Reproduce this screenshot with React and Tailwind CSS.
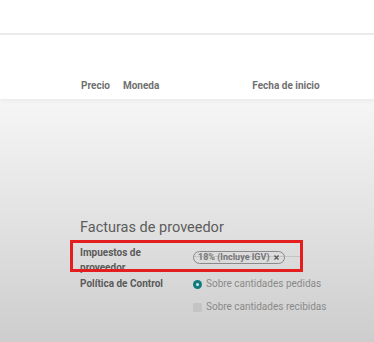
import { X } from 'lucide-react'

export default function App() {
  return (
    <div className="w-[374px] h-[342px] overflow-hidden bg-white font-['Roboto',sans-serif] flex flex-col">
      <div className="h-[33px] shrink-0 bg-white" />
      <div className="h-[2px] shrink-0 bg-[#ebebeb]" />
      <div className="h-[64px] shrink-0 bg-white flex items-end pb-[6px] text-[10px] font-bold text-[#707070] shadow-[0_2px_4px_rgba(0,0,0,0.05)] relative z-10">
        <span className="ml-[81px]">Precio</span>
        <span className="ml-[13px]">Moneda</span>
        <span className="ml-[93px]">Fecha de inicio</span>
      </div>
      <div className="flex-1 bg-gradient-to-b from-[#f6f6f6] via-[#e2e2e2] to-[#cdcdcd] pl-[80px] pt-[119px]">
        <h2 className="text-[14.5px] leading-[19px] text-[#5c5c5c]">Facturas de proveedor</h2>
        <div className="relative mt-[4px] h-[31px]">
          <div className="absolute left-[-10px] top-[-1px] w-[233px] h-[32px] border-[3px] border-[#e41e1e]" />
          <div className="flex">
            <div className="w-[113px] text-[10px] leading-[15px] font-bold text-[#5a5a5a] pt-[4px]">
              Impuestos de
              <br />
              proveedor
            </div>
            <div className="w-[107px] h-[15px] mt-[1px] border-b border-[#c4c4c4] pt-[1px]">
              <span className="inline-flex items-center h-[13px] px-[4px] rounded-full border-[1.5px] border-[#8a8a8a] text-[9px] font-bold text-[#777] leading-none">
                18% (Incluye IGV)
                <X className="w-[7px] h-[7px] ml-[3px] text-[#555]" strokeWidth={4} />
              </span>
            </div>
          </div>
        </div>
        <div className="flex mt-[4px]">
          <div className="w-[113px] text-[10px] leading-[16px] font-bold text-[#5a5a5a]">Política de Control</div>
          <div className="flex flex-col gap-[7px] text-[10px] leading-[16px] text-[#8a8a8a]">
            <div className="flex items-center">
              <span className="w-[9px] h-[9px] rounded-full bg-[#0f7c80] flex items-center justify-center">
                <span className="w-[3px] h-[3px] rounded-full bg-[#d8e8e8]" />
              </span>
              <span className="ml-[4px]">Sobre cantidades pedidas</span>
            </div>
            <div className="flex items-center">
              <span className="w-[9px] h-[9px] rounded-[1px] bg-[#c4c4c4]" />
              <span className="ml-[4px]">Sobre cantidades recibidas</span>
            </div>
          </div>
        </div>
      </div>
    </div>
  )
}
